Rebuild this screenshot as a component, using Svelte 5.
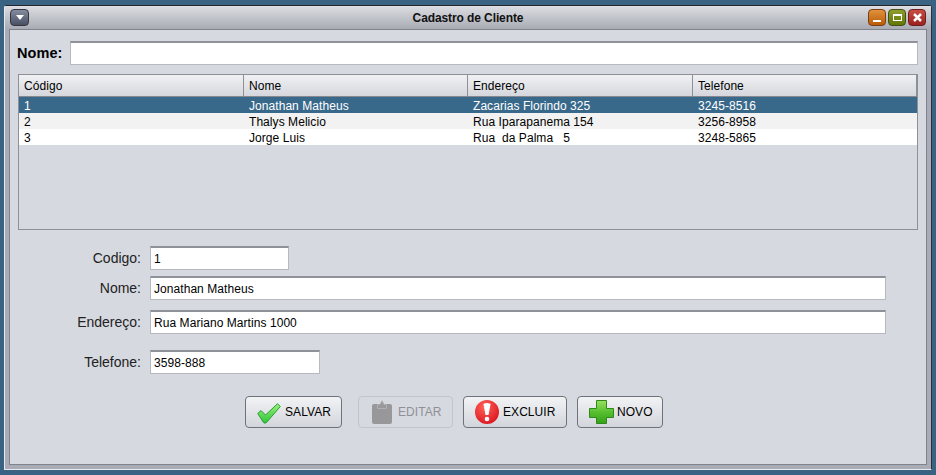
<script>
  const clientes = [
    { id: '1', nome: 'Jonathan Matheus', endereco: 'Zacarias Florindo 325', tel: '3245-8516' },
    { id: '2', nome: 'Thalys Melicio', endereco: 'Rua Iparapanema 154', tel: '3256-8958' },
    { id: '3', nome: 'Jorge Luis', endereco: 'Rua  da Palma   5', tel: '3248-5865' }
  ];
</script>

<div class="desktop">
  <div class="window">
    <div class="titlebar">
      <button class="menu-btn" aria-label="menu">
        <svg width="10" height="7" viewBox="0 0 10 7"><path d="M1 1h8L5 6z" fill="#fff" /></svg>
      </button>
      <span class="title">Cadastro de Cliente</span>
      <div class="controls">
        <button class="ctl min" aria-label="minimizar"><span class="bar"></span></button>
        <button class="ctl max" aria-label="maximizar"><span class="box"></span></button>
        <button class="ctl close" aria-label="fechar">
          <svg width="9" height="9" viewBox="0 0 9 9"><path d="M1 1l7 7M8 1l-7 7" stroke="#fff" stroke-width="2.500" /></svg>
        </button>
      </div>
    </div>

    <div class="content">
      <div class="search">
        <label for="busca">Nome:</label>
        <input id="busca" class="field" />
      </div>

      <div class="table">
        <div class="row head">
          <div>Código</div>
          <div>Nome</div>
          <div>Endereço</div>
          <div>Telefone</div>
        </div>
        {#each clientes as c, i}
          <div class="row" class:selected={i === 0} class:alt={i === 1}>
            <div>{c.id}</div>
            <div>{c.nome}</div>
            <div>{c.endereco}</div>
            <div>{c.tel}</div>
          </div>
        {/each}
      </div>

      <div class="form">
        <label for="f-cod">Codigo:</label>
        <input id="f-cod" class="field cod" value="1" />
        <label for="f-nome">Nome:</label>
        <input id="f-nome" class="field wide" value="Jonathan Matheus" />
        <label for="f-end" class="end-label">Endereço:</label>
        <input id="f-end" class="field wide" value="Rua Mariano Martins 1000" />
        <label for="f-tel" class="tel-label">Telefone:</label>
        <input id="f-tel" class="field tel" value="3598-888" />
      </div>

      <div class="actions">
        <button class="btn salvar">
          <svg width="24" height="21" viewBox="0 0 24 21">
            <defs>
              <linearGradient id="ok" x1="0" y1="0" x2="0" y2="1">
                <stop offset="0" stop-color="#9af07a" />
                <stop offset="1" stop-color="#2fc63a" />
              </linearGradient>
            </defs>
            <path d="M.7 10.500L4 7.500l4.500 4.500L20.500.7 23.300 3.500 9.500 19.500Q8 20.800 6.500 19.500z" fill="url(#ok)" stroke="#2b9e35" stroke-linejoin="round" />
          </svg>
          SALVAR
        </button>
        <button class="btn editar" disabled>
          <svg width="20" height="24" viewBox="0 0 20 24">
            <path d="M2 4h16a2 2 0 0 1 2 2v16a2 2 0 0 1-2 2H2a2 2 0 0 1-2-2V6a2 2 0 0 1 2-2z" fill="#98989b" />
            <path d="M5.500 8.500V4.500h2.500L10 .7l2 3.800h2.500v4z" fill="#98989b" stroke="#b0b0b3" />
          </svg>
          EDITAR
        </button>
        <button class="btn excluir">
          <svg width="24" height="24" viewBox="0 0 24 24">
            <defs>
              <radialGradient id="err" cx=".4" cy=".3" r=".8">
                <stop offset="0" stop-color="#ff6258" />
                <stop offset="1" stop-color="#d8101c" />
              </radialGradient>
            </defs>
            <circle cx="12" cy="12" r="12" fill="url(#err)" />
            <path d="M8.500 4.500a3.500 1.500 0 0 1 7 0L13.500 15h-3z" fill="#fff" />
            <circle cx="12" cy="19" r="2.300" fill="#fff" />
          </svg>
          EXCLUIR
        </button>
        <button class="btn novo">
          <svg width="25" height="24" viewBox="0 0 25 24">
            <defs>
              <linearGradient id="add" x1="0" y1="0" x2="0" y2="1">
                <stop offset="0" stop-color="#9ce060" />
                <stop offset=".5" stop-color="#58c030" />
                <stop offset="1" stop-color="#34a018" />
              </linearGradient>
            </defs>
            <path d="M7.500.5h10v8h7v9h-7v6h-10v-6h-7v-9h7z" fill="url(#add)" stroke="#2c8a1c" />
          </svg>
          NOVO
        </button>
      </div>
    </div>
  </div>
</div>

<style>
  :global(body) {
    margin: 0;
  }

  .desktop {
    width: 936px;
    height: 475px;
    box-sizing: border-box;
    padding: 5px 4px;
    background: #3a6282;
    font-family: "Liberation Sans", Arial, sans-serif;
    font-size: 12px;
    letter-spacing: 0.06px;
    color: #000;
  }

  .window {
    height: 100%;
    box-sizing: border-box;
    display: flex;
    flex-direction: column;
    border: 1px solid #2a2f38;
    border-top-color: #22262d;
    border-left-color: #e8e9ec;
    border-bottom-color: #e8e9ec;
    background: #a9acb6;
    padding: 0 4px 4px 4px;
    border-radius: 3px 3px 0 0;
  }

  .titlebar {
    height: 23px;
    margin: 0 -4px;
    padding: 3px 5px 0;
    box-sizing: border-box;
    display: flex;
    align-items: flex-start;
    position: relative;
    background: linear-gradient(#dcdee3, #a8abb3);
  }

  .menu-btn {
    width: 19px;
    height: 17px;
    padding: 0;
    display: flex;
    align-items: center;
    justify-content: center;
    border: 1px solid #32363f;
    border-radius: 4px;
    background: linear-gradient(#858c9f, #4a5063);
  }

  .title {
    position: absolute;
    left: 0;
    right: 0;
    top: 5px;
    text-align: center;
    font-weight: bold;
    letter-spacing: -0.1px;
    color: #111;
  }

  .controls {
    margin-left: auto;
    display: flex;
    gap: 2px;
    position: relative;
  }

  .ctl {
    width: 18px;
    height: 17px;
    padding: 0;
    display: flex;
    align-items: center;
    justify-content: center;
    border-radius: 4px;
    border: 1px solid #333;
  }

  .min {
    background: linear-gradient(#e0923c, #bb5a08);
    border-color: #7f3d13;
  }

  .bar {
    width: 8px;
    height: 2px;
    margin-top: 7px;
    background: #fff;
  }

  .max {
    background: linear-gradient(#8f9e2e, #627606);
    border-color: #434f16;
  }

  .box {
    width: 9px;
    height: 7px;
    box-sizing: border-box;
    border: 1px solid #fff;
    border-top-width: 2px;
  }

  .close {
    background: linear-gradient(#c94d42, #9c201c);
    border-color: #6e1f1f;
  }

  .content {
    flex: 1;
    box-sizing: border-box;
    border: 1px solid #7f838c;
    background: #d6d9e0;
    padding: 11px 8px 0 7px;
  }

  .search {
    display: flex;
    align-items: center;
    gap: 8px;
    height: 24px;
  }

  .search label {
    font-size: 14.500px;
    font-weight: bold;
  }

  .field {
    box-sizing: border-box;
    height: 24px;
    padding: 0 3px;
    font: inherit;
    letter-spacing: inherit;
    background: #fff;
    color: #000;
    border: 1px solid #b6b9bf;
    border-top: 2px solid #8f9298;
    border-radius: 0;
    outline: none;
  }

  .search .field {
    flex: 1;
  }

  .table {
    height: 156px;
    box-sizing: border-box;
    margin: 9px 0 0 1px;
    border: 1px solid #8d9097;
  }

  .row {
    display: grid;
    grid-template-columns: 225px 224px 225px 1fr;
    height: 16px;
    line-height: 18px;
    background: #fff;
    white-space: pre;
  }

  .row > div {
    padding-left: 5px;
  }

  .row.head {
    height: 22px;
    line-height: 23px;
    background: linear-gradient(#f0f1f3, #d5d7dd);
    border-bottom: 1px solid #85888f;
    box-sizing: border-box;
  }

  .row.head > div {
    height: 21px;
    border-right: 1px solid #8d9097;
  }

  .row.selected {
    background: #39698a;
    color: #fff;
  }

  .row.alt {
    background: #f2f2f2;
  }

  .form {
    margin-top: 16px;
    display: grid;
    grid-template-columns: 124px auto;
    column-gap: 9px;
    row-gap: 6px;
    justify-items: start;
    align-items: center;
  }

  .form label {
    justify-self: end;
    font-size: 14px;
    letter-spacing: 0;
    color: #222;
  }

  .tel-label {
    letter-spacing: 0.2px;
  }

  .end-label,
  .end-label + .field {
    margin-top: 4px;
  }

  .tel-label,
  .tel-label + .field {
    margin-top: 10px;
  }

  .cod {
    width: 139px;
  }

  .wide {
    width: 736px;
  }

  .tel {
    width: 170px;
  }

  .actions {
    margin-top: 22px;
    display: flex;
    padding-left: 228px;
  }

  .btn {
    height: 32px;
    box-sizing: border-box;
    padding: 0 0 0 11px;
    display: flex;
    align-items: center;
    gap: 4px;
    font: inherit;
    letter-spacing: inherit;
    color: #000;
    border: 1px solid #6f727a;
    border-radius: 4px;
    background: linear-gradient(#f2f3f5, #d2d5db);
  }

  .salvar {
    width: 97px;
    margin-right: 16px;
  }

  .salvar svg {
    margin-top: 3px;
  }

  .editar {
    width: 95px;
    margin-right: 10px;
    padding-left: 13px;
    gap: 6px;
    color: #8f9096;
    border-color: #c2c5cb;
    background: #d6d9e0;
  }

  .excluir {
    width: 104px;
    margin-right: 10px;
    gap: 4px;
  }

  .novo {
    width: 86px;
    gap: 3px;
  }
</style>
